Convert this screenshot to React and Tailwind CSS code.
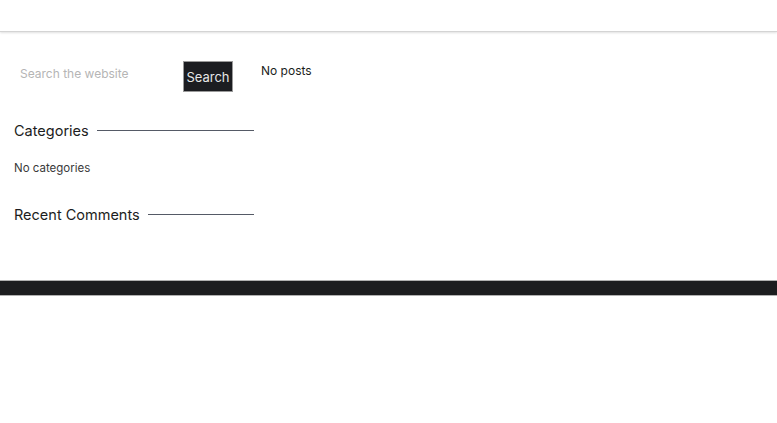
export default function App() {
  const font = { fontFamily: "Inter, 'Noto Sans', sans-serif" };
  return (
    <div className="min-h-[423px] bg-white text-[#1c1d21]" style={font}>
      <header className="h-8 bg-white border-b border-[#d4d4d4] shadow-[0_1px_2px_rgba(0,0,0,0.12)]" />
      <main className="flex pt-[29px] pb-[54px]">
        <aside className="w-[254px] pl-[14px] shrink-0">
          <form className="flex" onSubmit={(e) => e.preventDefault()}>
            <input
              type="text"
              placeholder="Search the website"
              className="w-[169px] h-[31px] px-[6px] pb-[6px] text-[12px] text-[#555] placeholder:text-[#b5b5b5] outline-none bg-white"
            />
            <button className="w-[50px] h-[31px] bg-[#1c1d21] border border-[#9a9a9a] text-[#e6e6e6] text-[13px] pt-[2px]">
              Search
            </button>
          </form>
          <div className="flex items-center gap-2 mt-[28px]">
            <h2 className="text-[14.5px] whitespace-nowrap">Categories</h2>
            <div className="flex-1 h-px bg-[#555a66]" />
          </div>
          <p className="text-[11.5px] text-[#3a3a3a] mt-[18px]">No categories</p>
          <div className="flex items-center gap-2 mt-[27px]">
            <h2 className="text-[14.5px] whitespace-nowrap">Recent Comments</h2>
            <div className="flex-1 h-px bg-[#555a66]" />
          </div>
        </aside>
        <section className="pl-[7px] pt-[1px]">
          <p className="text-[12px] text-[#1c1d21]">No posts</p>
        </section>
      </main>
      <footer className="h-4 bg-[#1c1d1f] border-y border-[#b0b0b0]" />
    </div>
  );
}
